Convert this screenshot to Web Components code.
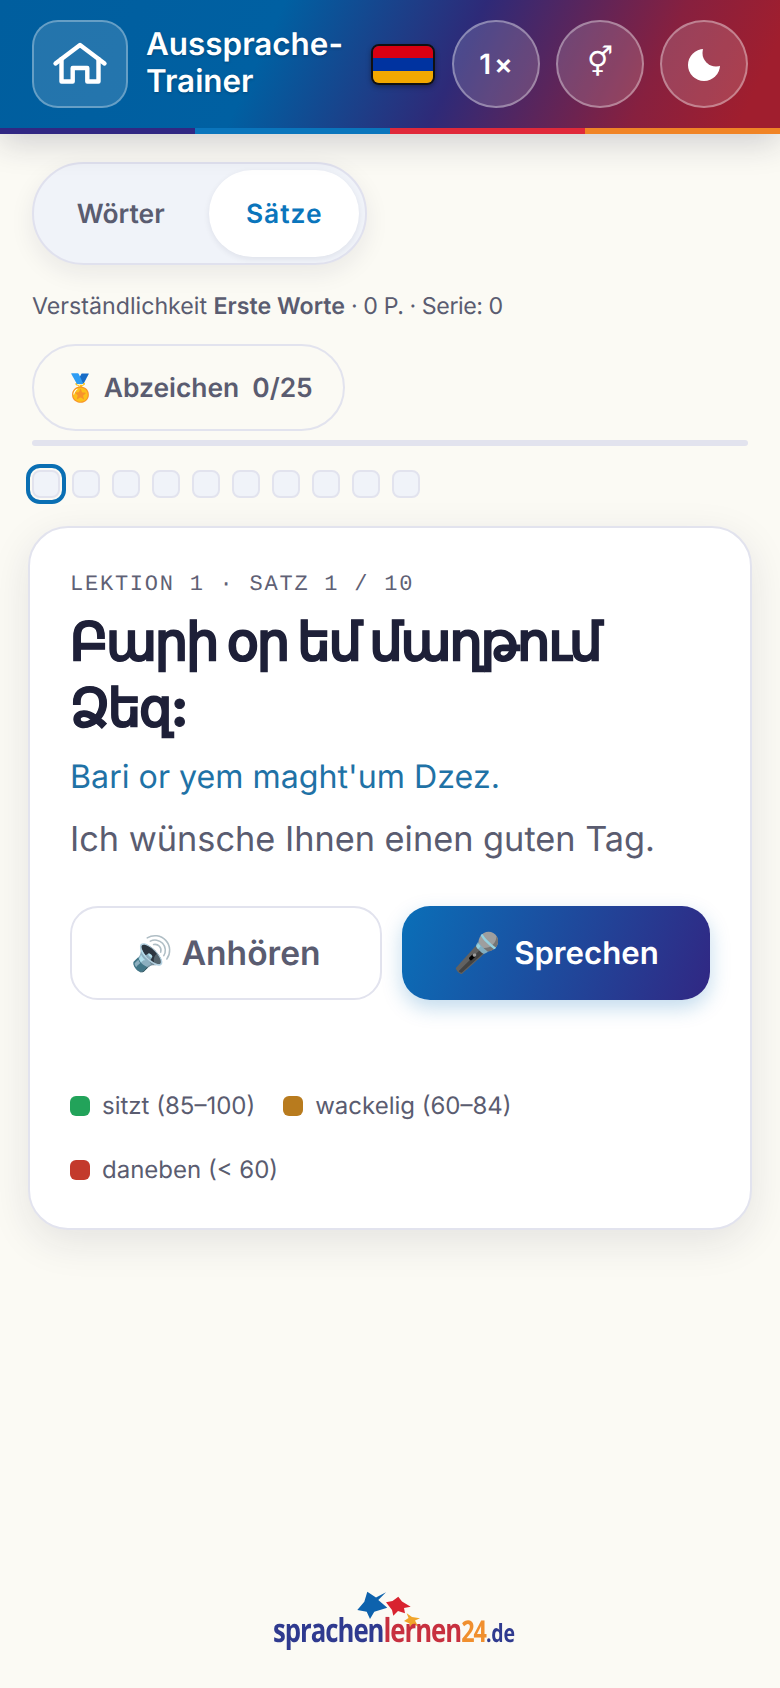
<!DOCTYPE html>
<html lang="de"><head><meta charset="utf-8"><title>Aussprache-Trainer</title>
<style>
html,body{margin:0;padding:0}
body{background:#fbfaf4;width:780px;height:1688px;overflow:hidden;font-family:Inter,"Noto Sans",sans-serif;color:#5a5c70;display:flex;flex-direction:column;text-rendering:geometricPrecision;-webkit-font-smoothing:antialiased}
</style></head><body>
<app-header></app-header>
<app-main></app-main>
<app-logo></app-logo>
<script>
function def(name,html){customElements.define(name,class extends HTMLElement{constructor(){super();this.attachShadow({mode:'open'}).innerHTML=html}})}
def('round-btn',`<style>:host{display:flex;width:88px;height:88px;box-sizing:border-box;border-radius:50%;border:2px solid rgba(255,255,255,.35);background:rgba(255,255,255,.15);color:#fff;align-items:center;justify-content:center;font:600 28px Inter,sans-serif}</style><slot></slot>`);
def('app-header',`<style>
:host{display:block;position:relative;box-shadow:0 8px 32px rgba(30,30,60,.2)}
.bar{height:128px;box-sizing:border-box;padding:20px 32px;display:flex;align-items:flex-start;background:linear-gradient(115deg,#005e9e 0%,#0060a2 34%,#2e2a78 58%,#87203f 82%,#a01e2e 95%)}
.home{width:96px;height:88px;box-sizing:border-box;border-radius:26px;border:2px solid rgba(255,255,255,.3);background:rgba(255,255,255,.14);display:flex;align-items:center;justify-content:center;flex:none}
.title{margin-left:18px;color:#fff;font:600 31.400px/37px Inter,sans-serif;flex:none;text-shadow:0 1px 3px rgba(0,0,0,.25);align-self:center;margin-top:-3px}
.flag{width:64px;height:41px;box-sizing:border-box;border:2px solid #111;border-radius:8px;overflow:hidden;flex:none;margin:24px 17px 0 auto;box-shadow:0 2px 5px rgba(0,0,0,.35);display:flex;flex-direction:column}
.flag i{flex:1;display:block}
.btns{display:flex;gap:16px}
.stripe{display:flex;height:6px}.stripe i{flex:1;display:block}
svg{display:block}
</style>
<div class="bar">
<div class="home"><svg width="56" height="56" viewBox="0 0 56 56" fill="none" stroke="#fff" stroke-width="4.400" stroke-linecap="round" stroke-linejoin="round"><path d="M3.500 27.500 28 9l24.500 18.500"/><path d="M9.500 23V45.500H20.700V32H35.300V45.500H46.500V23"/></svg></div>
<div class="title">Aussprache-<br>Trainer</div>
<div class="flag"><i style="background:#d90012"></i><i style="background:#0033a0"></i><i style="background:#f2a800"></i></div>
<div class="btns">
<round-btn><span style="letter-spacing:3px;margin-right:-3px">1×</span></round-btn>
<round-btn><span style="font:400 29px 'DejaVu Sans',sans-serif;padding-bottom:4px">⚥</span></round-btn>
<round-btn><svg width="34" height="34" viewBox="0 0 34 34"><mask id="m"><rect width="34" height="34" fill="#fff"/><circle cx="29" cy="6" r="13.500" fill="#000"/></mask><circle cx="17" cy="18" r="16" fill="#fff" mask="url(#m)"/></svg></round-btn>
</div></div>
<div class="stripe"><i style="background:#312783"></i><i style="background:#0a75bc"></i><i style="background:#e0293a"></i><i style="background:#f08426"></i></div>`);
def('mode-toggle',`<style>
:host{display:inline-flex;box-sizing:border-box;height:103px;width:335px;padding:6px;border:2px solid #e0e1ee;border-radius:52px;background:#f0f3f9;box-shadow:0 8px 24px rgba(30,30,60,.08);font:600 26.400px Inter,sans-serif;align-items:stretch}
span{display:flex;align-items:center;justify-content:center}
.a{width:162px;padding-right:8px;color:#5a5c70}
.b{width:150px;background:#fff;border-radius:44px;color:#0a75bc;letter-spacing:1px;box-shadow:0 2px 6px rgba(30,30,60,.08)}
</style><span class="a">Wörter</span><span class="b">Sätze</span>`);
def('badge-pill',`<style>
:host{display:inline-flex;box-sizing:border-box;height:87px;width:313px;border:2px solid #e2e3ee;border-radius:44px;align-items:center;justify-content:center;font:600 26.400px Inter,sans-serif;color:#5a5c70;gap:13px;white-space:nowrap}
</style><span>🏅 Abzeichen</span><span>0/25</span>`);
def('dot-row',`<style>
:host{display:flex;gap:12px;height:28px}
i{display:block;width:28px;height:28px;box-sizing:border-box;border-radius:8px;background:#f0f3f9;border:2px solid #e2e3ee}
i:first-of-type{outline:4px solid #0a6fb3;outline-offset:2px;border-radius:8px}
</style><i></i><i></i><i></i><i></i><i></i><i></i><i></i><i></i><i></i><i></i>`);
def('legend-item',`<style>:host{display:inline-flex;align-items:center;gap:12px;font:400 24px/1 Inter,sans-serif;color:#5a5c70;white-space:nowrap}
i{display:block;width:20px;height:20px;border-radius:6px;background:var(--c)}</style><i></i><slot></slot>`);
def('lesson-card',`<style>
:host{display:block;box-sizing:border-box;width:724px;height:704px;margin-left:-4px;padding:41px 40px 0;background:#fff;border:2px solid #e2e3ee;border-radius:40px;box-shadow:0 12px 40px rgba(30,30,60,.1)}
.k{font:400 22px/28px "Liberation Mono",monospace;letter-spacing:1.760px;color:#5f6175;margin-top:2px}
h2{margin:10px 0 0;font:800 52px/66px Inter,"Noto Sans",sans-serif;letter-spacing:-1.800px;color:#1e2038;-webkit-text-stroke:1px #1e2038}
.tr{font:400 32.200px/40px Inter,sans-serif;color:#1f72a6;margin-top:16px}
.de{font:400 34.300px/44px Inter,sans-serif;color:#5a5c70;margin-top:21px}
.btns{display:flex;gap:20px;margin-top:44px}
.btn{flex:1;height:94px;box-sizing:border-box;border-radius:28px;display:flex;align-items:center;justify-content:center;font:600 33.600px Inter,sans-serif;white-space:nowrap}
.l{background:#fff;border:2px solid #e2e3ee;color:#5a5c70}
.r{background:linear-gradient(110deg,#0a6fb8,#312783);color:#fff;font-size:31.200px;box-shadow:0 8px 20px rgba(10,111,184,.25);gap:13px}
.r span{font-size:38.500px}
.leg{display:flex;flex-wrap:wrap;gap:40px 28px;margin-top:94px}
</style>
<div class="k">LEKTION 1 · SATZ 1 / 10</div>
<h2 lang="hy">Բարի օր եմ մաղթում Ձեզ:</h2>
<div class="tr">Bari or yem maght'um Dzez.</div>
<div class="de">Ich wünsche Ihnen einen guten Tag.</div>
<div class="btns"><div class="btn l">🔊 Anhören</div><div class="btn r"><span>🎤</span>Sprechen</div></div>
<div class="leg"><legend-item style="--c:#22a35a">sitzt (85–100)</legend-item><legend-item style="--c:#b87b1e">wackelig (60–84)</legend-item><legend-item style="--c:#c33a2c">daneben (&lt; 60)</legend-item></div>`);
def('app-main',`<style>
:host{display:block;padding:28px 32px 0}
.meta{font:400 23.200px/30px Inter,sans-serif;color:#5a5c70;margin-top:26px}
.meta b{font-weight:600}
.meta span{letter-spacing:-.44px}
.badge{margin-top:23px;display:block}
.prog{height:6px;border-radius:3px;background:#e2e3ee;margin-top:9px}
dot-row{margin-top:24px}
lesson-card{margin-top:28px}
.top{height:103px}
</style>
<div class="top"><mode-toggle></mode-toggle></div>
<div class="meta">Verständlichkeit <b>Erste Worte</b><span> · 0 P. · Serie: 0</span></div>
<div class="badge" style="height:87px"><badge-pill></badge-pill></div>
<div class="prog"></div>
<dot-row></dot-row>
<lesson-card></lesson-card>`);
def('app-logo',`<style>
:host{display:flex;justify-content:center;margin-top:auto;padding:0 0 38px 7px}
.w{position:relative;width:241px;height:65px}
.t{position:absolute;left:0;bottom:0;white-space:nowrap;font:700 33px/34px "Open Sans",sans-serif;letter-spacing:-1.300px;transform:scaleX(.78);transform-origin:left bottom}
.t small{font-size:25px;letter-spacing:-.3px}
.t em{font-style:normal;font-size:30px}
svg{position:absolute;left:77px;top:0}
</style><div class="w">
<svg width="80" height="50" viewBox="0 0 80 50"><polygon fill="#0d62ad" points="17.300,6.700 26,12.500 36,7.300 28.300,15 37.300,22.700 24.300,26.700 20,34 16.700,26.700 7.300,25 14.300,16.700"/><polygon fill="#d8232f" points="48.300,11.700 52,16.500 60.700,21.700 54,23 55,28.300 48,26 43.300,30.700 42,25 36,17.300 42.500,16"/><polygon fill="#f0a52a" points="56.700,28.300 62,32 70,33.300 65,35.500 68.300,41.700 63.500,39 60,43.300 59.500,38.500 54,36 58.500,33"/></svg>
<div class="t"><span style="color:#2f3a8f">sprachen</span><span style="color:#c7303f">lernen</span><em style="color:#f08f2e">24</em><small style="color:#2f3a8f">.de</small></div></div>`);
</script>
</body></html>
